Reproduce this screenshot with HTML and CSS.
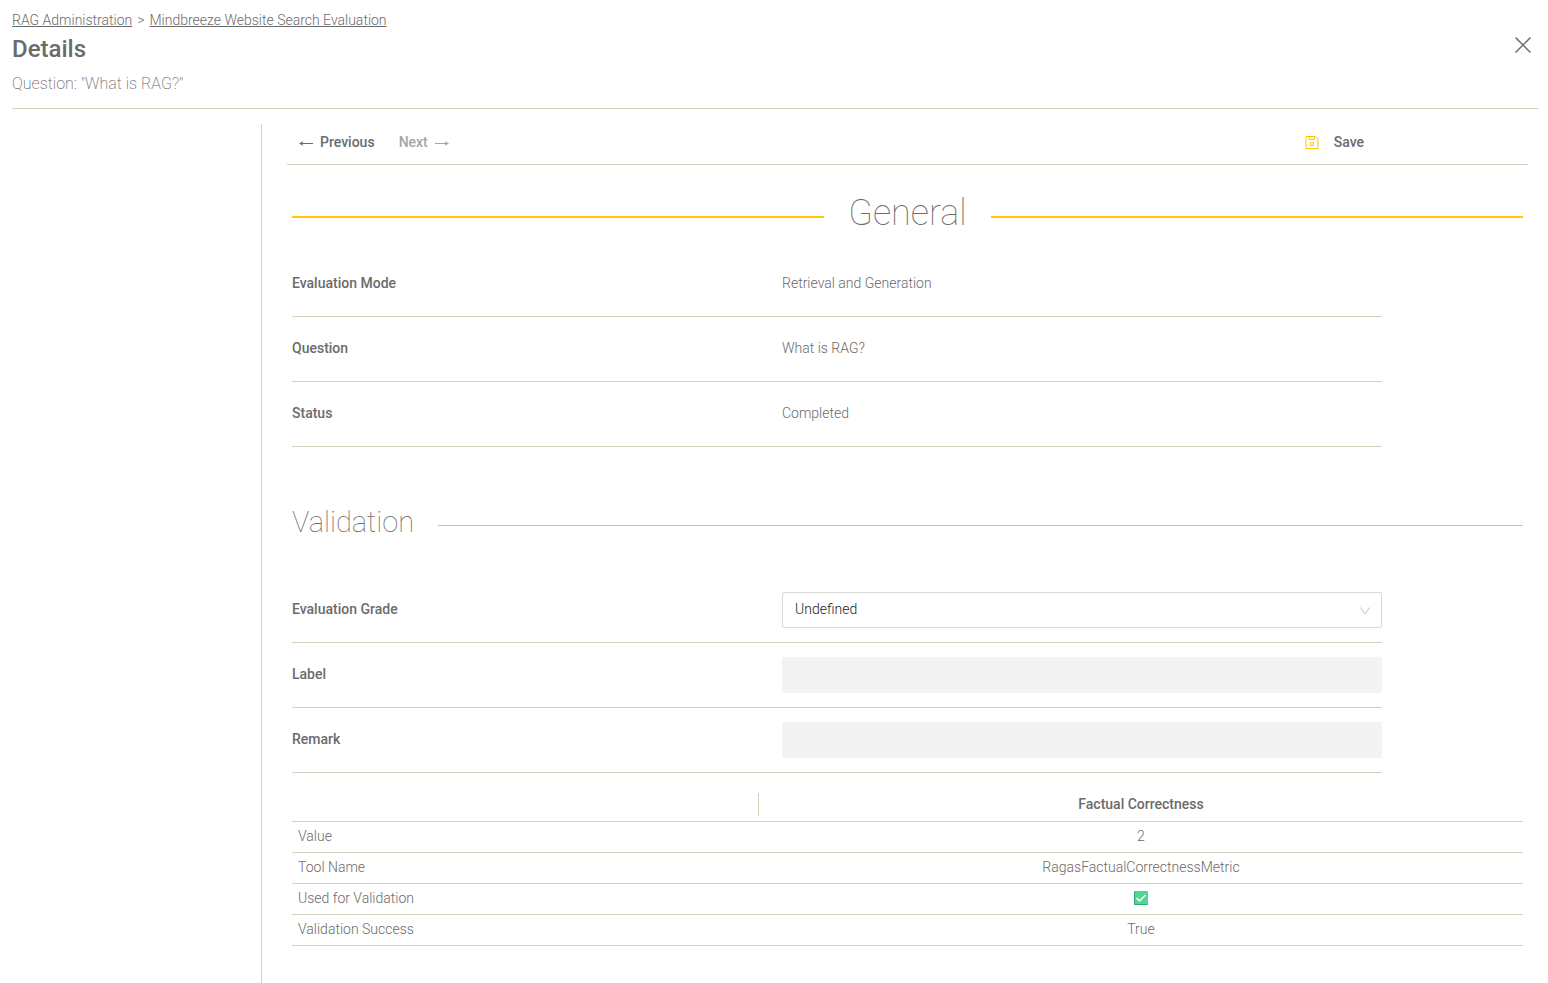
FILE: index.html
```
<!DOCTYPE html>
<html lang="en">
<head>
    <meta charset="UTF-8">
    <title>Details</title>
    <link rel="stylesheet" href="styles.css">
</head>
<body>
<header class="header">
    <div class="header-text">
        <nav class="breadcrumb">
            <a href="#">RAG Administration</a>
            <span>&gt;</span>
            <a href="#">Mindbreeze Website Search Evaluation</a>
        </nav>
        <h1>Details</h1>
        <p class="subtitle">Question: "What is RAG?"</p>
    </div>
    <button type="button" class="close" aria-label="Close">
        <svg width="16" height="16" viewBox="0 0 16 16"><path d="M0.5 0.5L15.5 15.5M15.5 0.5L0.5 15.5"/></svg>
    </button>
</header>
<div class="page">
    <aside class="sidebar"></aside>
    <main class="main">
        <div class="toolbar">
            <button type="button" class="tool">
                <svg width="14" height="10" viewBox="0 0 14 10"><path d="M14 6.5H1.5"/><path class="head" d="M0 6.5L4.5 4L3 6.5L4.5 9Z"/></svg>
                Previous
            </button>
            <button type="button" class="tool" disabled>
                Next
                <svg width="14" height="10" viewBox="0 0 14 10"><path d="M0 6.5H12.5"/><path class="head" d="M14 6.5L9.5 4L11 6.5L9.5 9Z"/></svg>
            </button>
            <button type="button" class="tool save">
                <svg width="14" height="14" viewBox="0 0 14 14"><path d="M1 1.5H10.5L13 4V13.5H1ZM4 1.5V4.5H9.5V1.5M5.5 7.5H8.5V10.5H5.5Z"/></svg>
                Save
            </button>
        </div>
        <div class="content">
            <h2 class="title-center">General</h2>
            <dl class="rows">
                <div class="row">
                    <dt>Evaluation Mode</dt>
                    <dd>Retrieval and Generation</dd>
                </div>
                <div class="row">
                    <dt>Question</dt>
                    <dd>What is RAG?</dd>
                </div>
                <div class="row">
                    <dt>Status</dt>
                    <dd>Completed</dd>
                </div>
            </dl>

            <h3 class="title-left">Validation</h3>
            <form class="rows">
                <div class="row">
                    <label for="grade">Evaluation Grade</label>
                    <div class="select">
                        <select id="grade">
                            <option>Undefined</option>
                        </select>
                        <svg width="10" height="8" viewBox="0 0 10 8"><path d="M0.5 0.5L5 7L9.5 0.5"/></svg>
                    </div>
                </div>
                <div class="row">
                    <label for="label">Label</label>
                    <input type="text" id="label">
                </div>
                <div class="row">
                    <label for="remark">Remark</label>
                    <input type="text" id="remark">
                </div>
            </form>

            <table class="metrics">
                <thead>
                    <tr>
                        <th><div class="divider"></div></th>
                        <th>Factual Correctness</th>
                    </tr>
                </thead>
                <tbody>
                    <tr>
                        <td>Value</td>
                        <td>2</td>
                    </tr>
                    <tr>
                        <td>Tool Name</td>
                        <td>RagasFactualCorrectnessMetric</td>
                    </tr>
                    <tr>
                        <td>Used for Validation</td>
                        <td>
                            <svg class="check" width="14" height="14" viewBox="0 0 14 14" role="img" aria-label="Yes">
                                <rect width="14" height="14" rx="1" fill="#36a873"/>
                                <rect x="1" width="13" height="13" rx="1" fill="#50d890"/>
                                <path d="M2.5 7L5.5 10L11.5 4" fill="none" stroke="#fff" stroke-width="1.5"/>
                            </svg>
                        </td>
                    </tr>
                    <tr>
                        <td>Validation Success</td>
                        <td>True</td>
                    </tr>
                </tbody>
            </table>
        </div>
    </main>
</div>
</body>
</html>
```
FILE: styles.css
```
* {
    box-sizing: border-box;
    margin: 0;
    padding: 0;
}
body {
    display: flex;
    flex-direction: column;
    min-height: 100vh;
    padding: 10px 10px 0 12px;
    background: #fff;
    color: #6b6b6b;
    font: 300 14px/20px Roboto, "Liberation Sans", sans-serif;
}
button, input, select {
    font: inherit;
    color: inherit;
    border: 0;
    background: none;
}

/* header */
.header {
    display: flex;
    justify-content: space-between;
    align-items: flex-start;
    padding-bottom: 12px;
    border-bottom: 1px solid #d2d2be;
}
.breadcrumb {
    display: flex;
    gap: 5px;
}
.breadcrumb a {
    color: inherit;
}
h1 {
    font-size: 24px;
    line-height: 38px;
    font-weight: 500;
}
.subtitle {
    margin-top: 4px;
    font-size: 16px;
    line-height: 24px;
    font-weight: 200;
}
.close {
    margin: 27px 7px 0 0;
    height: 16px;
}
.close svg {
    display: block;
    fill: none;
    stroke: #6b6b6b;
    stroke-width: 1.5;
}

/* layout */
.page {
    flex: 1;
    display: flex;
    padding-top: 15px;
}
.sidebar {
    width: 250px;
    border-right: 1px solid #d2d2be;
}
.main {
    flex: 1;
    padding: 0 10px 37px 25px;
}
.toolbar {
    display: flex;
    gap: 24px;
    height: 41px;
    padding: 0 164px 5px 12px;
    border-bottom: 1px solid #d2d2be;
}
.tool {
    display: flex;
    align-items: center;
    gap: 7px;
    font-weight: 500;
}
.tool svg {
    fill: none;
    stroke: currentColor;
}
.tool .head {
    fill: currentColor;
    stroke: none;
}
.tool:disabled {
    color: #a6a6a6;
}
.save {
    gap: 15px;
    margin-left: auto;
}
.save svg {
    stroke: #ffc800;
}
.content {
    padding: 24px 5px 0;
}

/* section titles */
.title-center,
.title-left {
    display: flex;
    align-items: center;
    font-weight: 100;
}
.title-center {
    gap: 24px;
    margin-bottom: 15px;
    font-size: 36px;
    line-height: 48px;
}
.title-center::before,
.title-center::after {
    content: "";
    flex: 1;
    height: 2px;
    margin-top: 7px;
    background: #ffc800;
}
.title-left {
    gap: 24px;
    margin: 55px 0 36px;
    font-size: 29px;
    line-height: 40px;
}
.title-left::after {
    content: "";
    flex: 1;
    height: 1px;
    margin-top: 7px;
    background: #ffc800;
}

/* label / value rows */
.rows {
    max-width: 1090px;
}
.row {
    display: grid;
    grid-template-columns: 490px 1fr;
    align-items: center;
    height: 65px;
    border-bottom: 1px solid #d2d2be;
}
.row dt,
.row dd,
.row label {
    padding-bottom: 2px;
}
.row dt,
.row label {
    font-weight: 500;
}
.row input {
    height: 36px;
    padding: 0 12px;
    border-radius: 2px;
    background: #f3f3f3;
}
.select {
    position: relative;
}
.select select {
    display: block;
    width: 100%;
    height: 36px;
    padding: 0 12px 2px;
    border: 1px solid #d9d9d9;
    border-radius: 2px;
    appearance: none;
    color: #222;
}
.select svg {
    position: absolute;
    top: 15px;
    right: 12px;
    fill: none;
    stroke: #bfbfbf;
    pointer-events: none;
}

/* metrics table */
.metrics {
    width: 100%;
    margin-top: 17px;
    border-collapse: collapse;
    table-layout: fixed;
}
.metrics th,
.metrics td {
    height: 31px;
    padding: 0 6px 2px;
    border-bottom: 1px solid #d2d2be;
    text-align: center;
}
.metrics th {
    font-weight: 500;
}
.metrics th:first-child {
    width: 467px;
    padding-right: 0;
}
.metrics td:first-child {
    text-align: left;
}
.divider {
    height: 23px;
    border-right: 1px solid #d2d2be;
}
.check {
    display: block;
    margin: 0 auto;
}
```
